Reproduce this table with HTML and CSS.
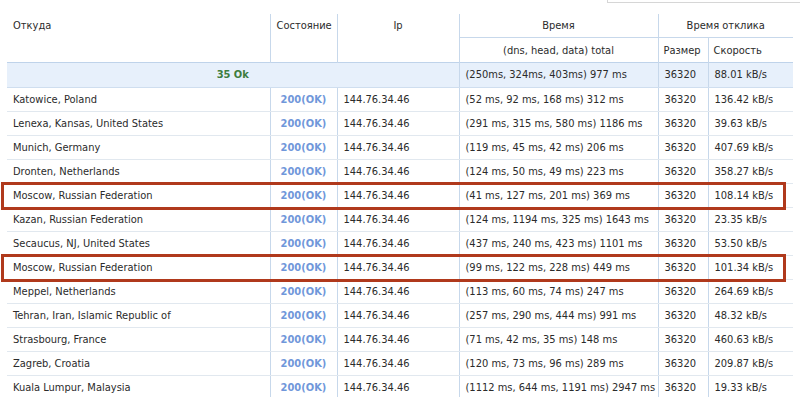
FILE: index.html
```html
<!DOCTYPE html>
<html lang="ru">
<head>
  <meta charset="UTF-8" />
  <title>Проверка доступности</title>
  <link rel="stylesheet" href="styles.css">
</head>
<body>
  <div class="toolbar">
    <div class="search-box"></div>
  </div>

  <div class="report">
    <table class="results">
      <colgroup>
        <col class="col-from">
        <col class="col-state">
        <col class="col-ip">
        <col class="col-time">
        <col class="col-size">
        <col class="col-speed">
      </colgroup>
      <thead>
        <tr class="head-top">
          <th rowspan="2" class="left">Откуда</th>
          <th rowspan="2">Состояние</th>
          <th rowspan="2">Ip</th>
          <th class="group">Время</th>
          <th colspan="2" class="group">Время отклика</th>
        </tr>
        <tr class="head-sub">
          <th>(dns, head, data) total</th>
          <th class="left">Размер</th>
          <th class="left">Скорость</th>
        </tr>
      </thead>
      <tbody>
        <tr class="summary">
          <td colspan="3" class="total-ok">35 Ok</td>
          <td>(250ms, 324ms, 403ms) 977 ms</td>
          <td>36320</td>
          <td>88.01 kB/s</td>
        </tr>
        <tr><td>Katowice, Poland</td><td class="status">200(OK)</td><td>144.76.34.46</td><td>(52 ms, 92 ms, 168 ms) 312 ms</td><td>36320</td><td>136.42 kB/s</td></tr>
        <tr><td>Lenexa, Kansas, United States</td><td class="status">200(OK)</td><td>144.76.34.46</td><td>(291 ms, 315 ms, 580 ms) 1186 ms</td><td>36320</td><td>39.63 kB/s</td></tr>
        <tr><td>Munich, Germany</td><td class="status">200(OK)</td><td>144.76.34.46</td><td>(119 ms, 45 ms, 42 ms) 206 ms</td><td>36320</td><td>407.69 kB/s</td></tr>
        <tr><td>Dronten, Netherlands</td><td class="status">200(OK)</td><td>144.76.34.46</td><td>(124 ms, 50 ms, 49 ms) 223 ms</td><td>36320</td><td>358.27 kB/s</td></tr>
        <tr><td>Moscow, Russian Federation</td><td class="status">200(OK)</td><td>144.76.34.46</td><td>(41 ms, 127 ms, 201 ms) 369 ms</td><td>36320</td><td>108.14 kB/s</td></tr>
        <tr><td>Kazan, Russian Federation</td><td class="status">200(OK)</td><td>144.76.34.46</td><td>(124 ms, 1194 ms, 325 ms) 1643 ms</td><td>36320</td><td>23.35 kB/s</td></tr>
        <tr><td>Secaucus, NJ, United States</td><td class="status">200(OK)</td><td>144.76.34.46</td><td>(437 ms, 240 ms, 423 ms) 1101 ms</td><td>36320</td><td>53.50 kB/s</td></tr>
        <tr><td>Moscow, Russian Federation</td><td class="status">200(OK)</td><td>144.76.34.46</td><td>(99 ms, 122 ms, 228 ms) 449 ms</td><td>36320</td><td>101.34 kB/s</td></tr>
        <tr><td>Meppel, Netherlands</td><td class="status">200(OK)</td><td>144.76.34.46</td><td>(113 ms, 60 ms, 74 ms) 247 ms</td><td>36320</td><td>264.69 kB/s</td></tr>
        <tr><td>Tehran, Iran, Islamic Republic of</td><td class="status">200(OK)</td><td>144.76.34.46</td><td>(257 ms, 290 ms, 444 ms) 991 ms</td><td>36320</td><td>48.32 kB/s</td></tr>
        <tr><td>Strasbourg, France</td><td class="status">200(OK)</td><td>144.76.34.46</td><td>(71 ms, 42 ms, 35 ms) 148 ms</td><td>36320</td><td>460.63 kB/s</td></tr>
        <tr><td>Zagreb, Croatia</td><td class="status">200(OK)</td><td>144.76.34.46</td><td>(120 ms, 73 ms, 96 ms) 289 ms</td><td>36320</td><td>209.87 kB/s</td></tr>
        <tr><td>Kuala Lumpur, Malaysia</td><td class="status">200(OK)</td><td>144.76.34.46</td><td>(1112 ms, 644 ms, 1191 ms) 2947 ms</td><td>36320</td><td>19.33 kB/s</td></tr>
      </tbody>
    </table>

    <!-- hand-drawn marks over the two Moscow rows -->
    <div class="mark mark-first"></div>
    <div class="mark mark-second"></div>
  </div>
</body>
</html>
```

FILE: styles.css
```css
*, *::before, *::after {
  box-sizing: border-box;
}

html, body {
  margin: 0;
  padding: 0;
  overflow: hidden;
}

body {
  font-family: "DejaVu Sans Condensed", "DejaVu Sans", sans-serif;
  font-size: 11px;
  color: #2b2b2b;
  background: #ffffff;
  width: 800px;
  height: 397px;
}

.toolbar {
  display: flex;
  justify-content: flex-end;
  height: 14px;
}

.search-box {
  width: 193px;
  height: 3px;
  border-left: 1px solid #d6d6d6;
  border-bottom: 1px solid #d6d6d6;
}

.report {
  position: relative;
  padding-left: 7px;
}

.results {
  width: 786px;
  table-layout: fixed;
  border-collapse: collapse;
}

.col-from { width: 263px; }
.col-state { width: 67px; }
.col-ip { width: 122px; }
.col-time { width: 199px; }
.col-size { width: 50px; }
.col-speed { width: 85px; }

th, td {
  padding: 0 6px;
  white-space: nowrap;
  overflow: hidden;
  text-align: left;
}

th {
  font-weight: normal;
  text-align: center;
  border-left: 1px solid #c7d8eb;
}

th.left {
  text-align: left;
  padding-left: 5px;
}

.head-top th:first-child {
  border-left: none;
  padding-left: 6px;
}

.head-top th {
  height: 23px;
  vertical-align: middle;
  padding-top: 1px;
}

.head-top th[rowspan] {
  vertical-align: top;
  padding-top: 5px;
}

.head-top th.group {
  border-bottom: 1px solid #c7d8eb;
}

.head-sub th {
  height: 25px;
  padding-top: 1px;
}

.summary td {
  height: 25px;
  background: #e7f0fb;
  border-top: 1px solid #bfd3ea;
  border-bottom: 1px solid #cfdeef;
  border-left: 1px solid #c7d8eb;
}

.summary td.total-ok {
  border-left: none;
  text-align: center;
  font-weight: bold;
  color: #3e7d3e;
}

tbody tr {
  height: 24px;
}

tbody td {
  border-bottom: 1px solid #e1e8ef;
  border-left: 1px solid #c7d8eb;
}

tbody td:first-child {
  border-left: none;
}

td.status {
  text-align: center;
  font-weight: bold;
  color: #7097da;
}

.mark {
  position: absolute;
  left: 1px;
  width: 785px;
  height: 28px;
  border: 3px solid #b0391c;
}

.mark-first {
  top: 168px;
}

.mark-second {
  top: 240px;
}
```
